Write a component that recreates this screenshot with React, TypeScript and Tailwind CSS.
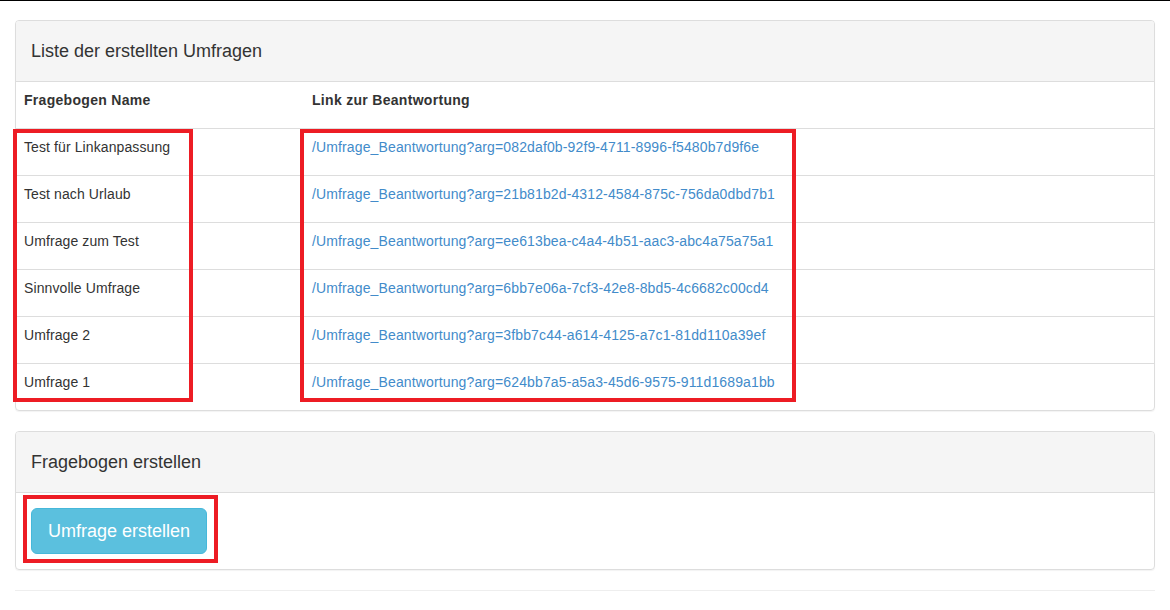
import React from "react";

const rows = [
  ["Test für Linkanpassung", "082daf0b-92f9-4711-8996-f5480b7d9f6e"],
  ["Test nach Urlaub", "21b81b2d-4312-4584-875c-756da0dbd7b1"],
  ["Umfrage zum Test", "ee613bea-c4a4-4b51-aac3-abc4a75a75a1"],
  ["Sinnvolle Umfrage", "6bb7e06a-7cf3-42e8-8bd5-4c6682c00cd4"],
  ["Umfrage 2", "3fbb7c44-a614-4125-a7c1-81dd110a39ef"],
  ["Umfrage 1", "624bb7a5-a5a3-45d6-9575-911d1689a1bb"],
];

export default function App() {
  return (
    <div
      className="relative min-h-[610px] bg-white text-[14px] text-[#333]"
      style={{ fontFamily: '"Liberation Sans", Arial, sans-serif' }}
    >
      <div className="h-px bg-black" />
      <div className="px-[15px] pt-[19px]">
        {/* Panel 1 */}
        <div className="rounded-[4px] border border-[#ddd] shadow-[0_1px_1px_rgba(0,0,0,0.05)]">
          <div className="flex h-[61px] items-center rounded-t-[3px] border-b border-[#ddd] bg-[#f5f5f5] px-[15px] text-[18px]">
            Liste der erstellten Umfragen
          </div>
          <div className="flex h-[47px] border-b border-[#ddd] font-bold tracking-[0.3px]">
            <div className="w-[288px] px-2 pt-[8px] leading-5">Fragebogen Name</div>
            <div className="flex-1 px-2 pt-[8px] leading-5">Link zur Beantwortung</div>
          </div>
          {rows.map(([name, id], i) => (
            <div
              key={id}
              className={
                i < rows.length - 1
                  ? "flex h-[47px] border-b border-[#ddd]"
                  : "flex h-[46px]"
              }
            >
              <div className="w-[288px] px-2 pt-[8px] leading-5 tracking-[0.1px]">{name}</div>
              <div className="flex-1 px-2 pt-[8px] leading-5">
                <a className="tracking-[0.13px] text-[#428bca]">/Umfrage_Beantwortung?arg={id}</a>
              </div>
            </div>
          ))}
        </div>

        {/* Panel 2 */}
        <div className="mt-[20px] rounded-[4px] border border-[#ddd] shadow-[0_1px_1px_rgba(0,0,0,0.05)]">
          <div className="flex h-[61px] items-center rounded-t-[3px] border-b border-[#ddd] bg-[#f5f5f5] px-[15px] text-[18px]">
            Fragebogen erstellen
          </div>
          <div className="p-[15px]">
            <button className="h-[46px] w-[176px] rounded-[6px] border border-[#46b8da] bg-[#5bc0de] text-[18px] text-white">
              Umfrage erstellen
            </button>
          </div>
        </div>

        <div className="mt-[20px] border-t border-[#eee]" />
      </div>

      {/* Red annotation boxes */}
      <div className="absolute left-[13px] top-[129px] h-[273px] w-[180px] border-[4px] border-[#ed1c24]" />
      <div className="absolute left-[300px] top-[129px] h-[273px] w-[496px] border-[4px] border-[#ed1c24]" />
      <div className="absolute left-[23px] top-[495px] h-[68px] w-[195px] border-[4px] border-[#ed1c24]" />
    </div>
  );
}
